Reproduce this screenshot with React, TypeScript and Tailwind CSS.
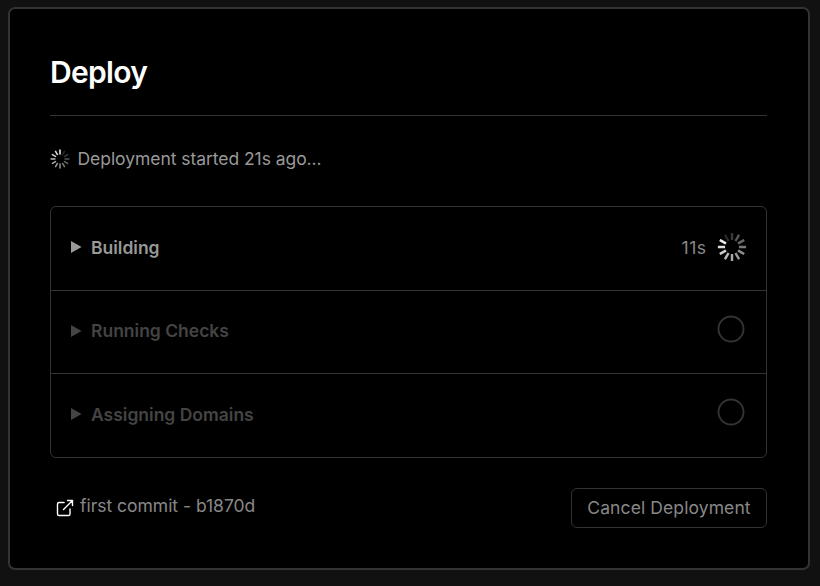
type SpinnerProps = { size: number; head: number };

function Spinner({ size, head }: SpinnerProps) {
  return (
    <svg width={size} height={size} viewBox="0 0 100 100" className="block shrink-0">
      {Array.from({ length: 12 }, (_, i) => (
        <rect
          key={i}
          x="73"
          y="46"
          width="24"
          height="8"
          rx="1"
          fill="#ededed"
          opacity={1 - i * 0.07 - (i > 9 ? 0.06 : 0)}
          transform={`rotate(${(head - i) * 30 - 90} 50 50)`}
        />
      ))}
    </svg>
  );
}

function Triangle() {
  return (
    <svg width="11" height="12" viewBox="0 0 11 12" className="mb-px block shrink-0" fill="currentColor">
      <path d="M0 0L10.6 6L0 12Z" />
    </svg>
  );
}

function Pending() {
  return (
    <svg width="28" height="28" viewBox="0 0 28 28" className="mb-[5px] block shrink-0" fill="none" stroke="#333" strokeWidth="1.9">
      <circle cx="14" cy="14" r="12.5" />
    </svg>
  );
}

export default function App() {
  return (
    <div className="h-[586px] w-[820px] bg-[#111] pt-[7px] pl-2 font-['Inter',sans-serif] text-[17.5px] leading-[26px] text-[#888]">
      <main className="flex h-[563px] w-[802px] flex-col rounded-[7px] border-2 border-[#333] bg-black pr-[41px] pl-10">
        <h1 className="h-[107px] border-b border-[#333] pt-[44px] text-[30px] leading-[38px] font-semibold tracking-[-0.7px] text-white">
          Deploy
        </h1>
        <div className="mt-[30px] flex h-[26px] items-center gap-[7.5px]">
          <Spinner size={20} head={0} />
          <span className="tracking-[-0.05px] text-[#999]">Deployment started 21s ago...</span>
        </div>
        <section className="mt-[34px] flex h-[252px] flex-col rounded-[6px] border border-[#333] font-semibold">
          <div className="flex h-[84px] items-center border-b border-[#333] pr-[19.5px] pb-[2px] pl-5 text-[#999]">
            <Triangle />
            <span className="ml-[9px] flex-1">Building</span>
            <span className="mr-[10px] font-normal tracking-[0.5px] text-[#888]">11s</span>
            <div className="pb-px">
              <Spinner size={30} head={10} />
            </div>
          </div>
          <div className="flex h-[83px] items-center border-b border-[#333] pr-[21px] pb-[2px] pl-5 text-[#444]">
            <Triangle />
            <span className="ml-[9px] flex-1">Running Checks</span>
            <Pending />
          </div>
          <div className="flex h-[83px] items-center pr-[21px] pb-[2px] pl-5 text-[#444]">
            <Triangle />
            <span className="ml-[9px] flex-1">Assigning Domains</span>
            <Pending />
          </div>
        </section>
        <footer className="mt-[30px] flex h-10 items-start justify-between">
          <div className="flex pt-[5px] pl-[6px]">
            <svg
              width="18"
              height="18"
              viewBox="0 0 18 18"
              className="mt-[6px] mr-[6px] block"
              fill="none"
              stroke="#fff"
              strokeWidth="1.4"
              strokeLinecap="round"
              strokeLinejoin="round"
            >
              <path d="M14 10v4.9a1.6 1.6 0 0 1-1.6 1.6H3.1a1.6 1.6 0 0 1-1.6-1.6V5.1a1.6 1.6 0 0 1 1.6-1.6h5" />
              <path d="M11.5 1.5h5v5M7.5 10.5l9-9" />
            </svg>
            <span className="tracking-[-0.02px]">first commit - b1870d</span>
          </div>
          <button className="h-10 w-[196px] rounded-[6px] border border-[#333] tracking-[0.1px] whitespace-nowrap">
            Cancel Deployment
          </button>
        </footer>
      </main>
    </div>
  );
}
